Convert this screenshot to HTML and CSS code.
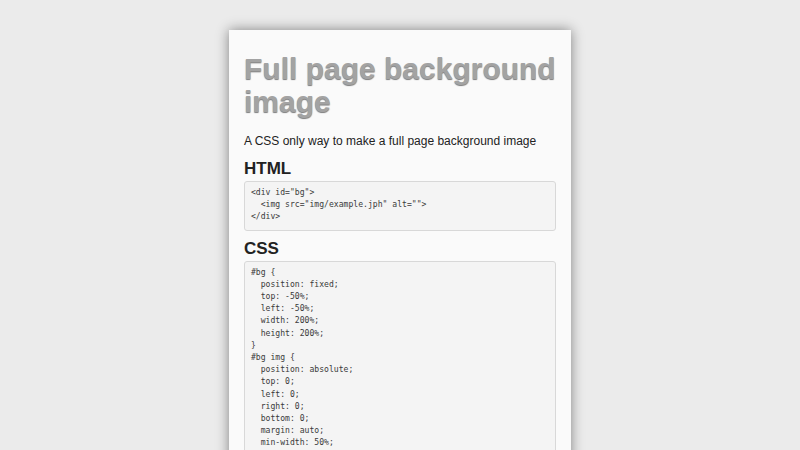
FILE: index.html
```html
<!DOCTYPE html>
<html>
<head>
<meta charset="utf-8">
<link rel="stylesheet" href="styles.css">
</head>
<body>
<div class="card">
  <h1 class="title">Full page background image</h1>
  <p class="lead">A CSS only way to make a full page background image</p>
  <h2 class="section">HTML</h2>
  <pre class="code">&lt;div id="bg"&gt;
  &lt;img src="img/example.jph" alt=""&gt;
&lt;/div&gt;</pre>
  <h2 class="section">CSS</h2>
  <pre class="code">#bg {
  position: fixed;
  top: -50%;
  left: -50%;
  width: 200%;
  height: 200%;
}
#bg img {
  position: absolute;
  top: 0;
  left: 0;
  right: 0;
  bottom: 0;
  margin: auto;
  min-width: 50%;
  min-height: 50%;
}</pre>
</div>
</body>
</html>
```
FILE: styles.css
```css
html, body {
  margin: 0;
  padding: 0;
  background: #ebebeb;
  height: 100%;
  overflow: hidden;
}
body {
  display: flex;
  justify-content: center;
  padding-top: 30px;
  font-family: "Liberation Sans", Arial, sans-serif;
  color: #333;
}
.card {
  width: 312px;
  padding: 22px 15px 20px;
  background: #fafafa;
  box-shadow: 0 0 12px rgba(0,0,0,0.45);
  min-height: 600px;
}
.title {
  margin: 0;
  font-size: 30px;
  line-height: 33px;
  font-weight: bold;
  color: #a3a3a3;
  text-shadow: 0 1px 1px rgba(0,0,0,0.5);
}
.lead {
  margin: 14px 0 9px;
  font-size: 12px;
  line-height: 18px;
  color: #222;
}
.section {
  margin: 8px 0 2px;
  font-size: 17px;
  line-height: 20px;
  font-weight: bold;
  color: #222;
}
.code {
  margin: 0;
  padding: 4px 6px 7px;
  background: #f4f4f4;
  border: 1px solid #d8d8d8;
  border-radius: 3px;
  font-family: "DejaVu Sans Mono", monospace;
  font-size: 8.1px;
  line-height: 12.2px;
  color: #3a3a3a;
  white-space: pre;
}
```
